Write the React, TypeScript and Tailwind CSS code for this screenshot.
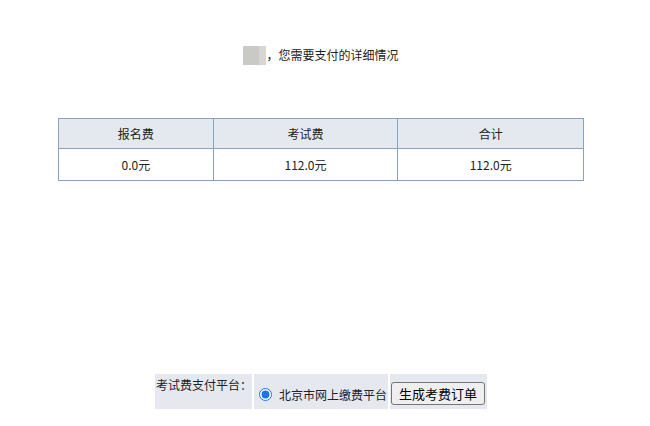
import React from "react";

const font = { fontFamily: '"Noto Sans CJK SC", "Noto Sans", sans-serif' };

const fees = [
  { label: "报名费", value: "0.0元", w: "w-[155px]" },
  { label: "考试费", value: "112.0元", w: "w-[185px]" },
  { label: "合计", value: "112.0元", w: "w-[186px]" },
];

const App: React.FC = () => {
  return (
    <div className="w-[650px] h-[426px] bg-white text-[12px] text-[#222]" style={font}>
      <div className="w-[642px] flex flex-col items-center">
        {/* Heading */}
        <div className="mt-[45px] h-[20px] flex items-center">
          <span className="flex h-[19px]">
            <span className="w-[16px] bg-[#c9c9c6]" />
            <span className="w-[7px] bg-[#d6d6d3]" />
          </span>
          <span className="leading-[20px]">，您需要支付的详细情况</span>
        </div>

        {/* Fee table */}
        <table className="mt-[53px] w-[526px] border-collapse border border-[#8aa3bf]">
          <thead>
            <tr className="bg-[#e4e9f0] h-[30px]">
              {fees.map((f) => (
                <th key={f.label} className={`${f.w} border border-[#8aa3bf] font-normal text-center`}>
                  {f.label}
                </th>
              ))}
            </tr>
          </thead>
          <tbody>
            <tr className="h-[32px]">
              {fees.map((f) => (
                <td key={f.label} className="border border-[#8aa3bf] text-center">
                  {f.value}
                </td>
              ))}
            </tr>
          </tbody>
        </table>

        {/* Payment platform */}
        <div className="mt-[193px] flex gap-[2px] h-[35px]">
          <div className="w-[97px] bg-[#e5e8ee] pl-[1px] pt-[3px] leading-[16px] whitespace-nowrap">考试费支付平台：</div>
          <div className="w-[134px] bg-[#e5e8ee] flex items-center pl-[5px] pt-[6px]">
            <input type="radio" checked readOnly className="w-[13px] h-[13px] m-0 mr-[7px] accent-[#1a73e8]" />
            <span>北京市网上缴费平台</span>
          </div>
          <div className="w-[97px] bg-[#e5e8ee] flex items-center pl-[1px] pt-[4px]">
            <button className="h-[23px] px-[7px] border border-[#767676] rounded-[3px] bg-[#efefef] text-[13px] text-black leading-none">
              生成考费订单
            </button>
          </div>
        </div>
      </div>
    </div>
  );
};

export default App;
